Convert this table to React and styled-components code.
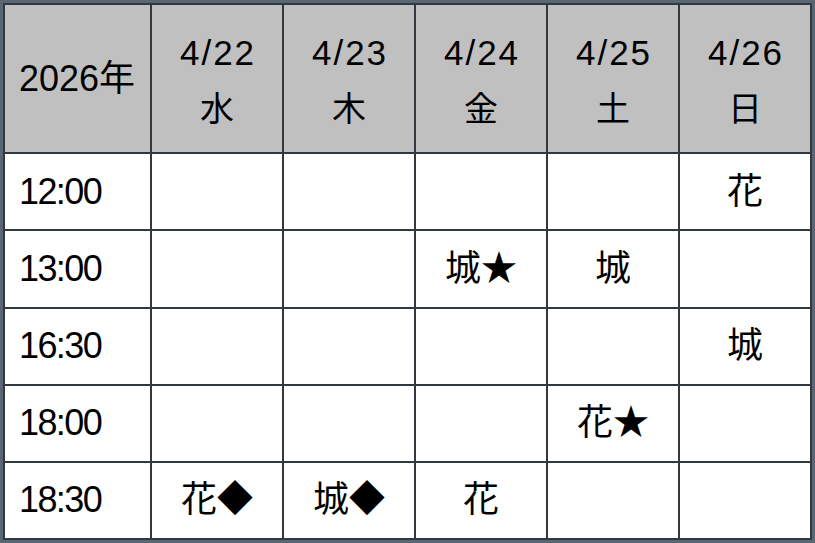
import React from "react";
import styled, { createGlobalStyle } from "styled-components";

const Global = createGlobalStyle`
  html, body { margin: 0; padding: 0; background: #ffffff; }
  #root { width: 815px; height: 543px; }
`;

const Frame = styled.div`
  box-sizing: border-box;
  width: 815px;
  height: 543px;
  border: 3px solid #5b6673;
  background: #ffffff;
`;

const Table = styled.table`
  width: 100%;
  height: 100%;
  border-collapse: collapse;
  table-layout: fixed;
  font-family: "Liberation Sans", "Noto Sans CJK JP", sans-serif;
  color: #000;
`;

const HeadRow = styled.tr`
  height: 149px;
  background: #c0c0c0;
`;

const BodyRow = styled.tr`
  height: 77px;
`;

const Cell = styled.td`
  border: 2px solid #313840;
  padding: 0;
  text-align: ${(p) => (p.$left ? "left" : "center")};
  padding-left: ${(p) => (p.$left ? "14px" : "0")};
  vertical-align: middle;
  font-size: 36px;
  line-height: 1;
  white-space: nowrap;
`;

const TimeText = styled.span`
  letter-spacing: ${(p) => (p.$year ? "0" : "-1.6px")};
`;

const DateText = styled.span`
  display: block;
  font-size: ${(p) => (p.$day ? "34px" : "35px")};
  line-height: ${(p) => (p.$day ? "52px" : "60px")};
  letter-spacing: ${(p) => (p.$day ? "0" : "2px")};
  margin-right: ${(p) => (p.$day ? "0" : "-2px")};
`;

const days = [
  ["4/22", "水"],
  ["4/23", "木"],
  ["4/24", "金"],
  ["4/25", "土"],
  ["4/26", "日"],
];

const rows = [
  ["12:00", ["", "", "", "", "花"]],
  ["13:00", ["", "", "城★", "城", ""]],
  ["16:30", ["", "", "", "", "城"]],
  ["18:00", ["", "", "", "花★", ""]],
  ["18:30", ["花◆", "城◆", "花", "", ""]],
];

export default function App() {
  return (
    <>
      <Global />
      <Frame>
        <Table>
          <colgroup>
            <col style={{ width: "147px" }} />
            <col />
            <col />
            <col />
            <col />
            <col />
          </colgroup>
          <tbody>
            <HeadRow>
              <Cell $left>
                <TimeText $year>2026年</TimeText>
              </Cell>
              {days.map(([d, w]) => (
                <Cell key={d}>
                  <DateText>{d}</DateText>
                  <DateText $day>{w}</DateText>
                </Cell>
              ))}
            </HeadRow>
            {rows.map(([t, vals]) => (
              <BodyRow key={t}>
                <Cell $left>
                  <TimeText>{t}</TimeText>
                </Cell>
                {vals.map((v, i) => (
                  <Cell key={i}>{v}</Cell>
                ))}
              </BodyRow>
            ))}
          </tbody>
        </Table>
      </Frame>
    </>
  );
}
